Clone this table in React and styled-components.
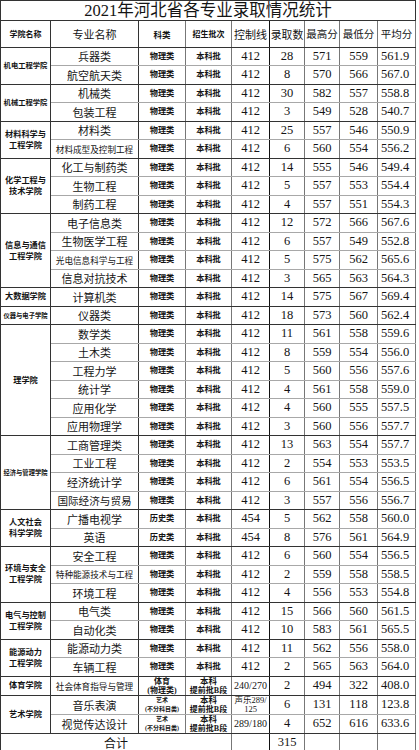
import React from "react";
import styled, { createGlobalStyle } from "styled-components";

const GlobalStyle = createGlobalStyle`
  body {
    margin: 0;
    background: #ffffff;
  }
`;

const FONT = `"Liberation Serif", "Noto Sans CJK SC", serif`;

const Sheet = styled.table`
  border-collapse: collapse;
  table-layout: fixed;
  width: 416px;
  font-family: ${FONT};
  color: #141414;
  border: 1px solid #333;
`;

const Col = styled.col`
  width: ${(p) => p.$w}px;
`;

const TitleRow = styled.tr`
  height: 20px;
`;

const TitleCell = styled.th`
  font-size: 16.5px;
  font-weight: 400;
  line-height: 18px;
  padding: 0;
  border-bottom: 1px solid #333;
  white-space: nowrap;
`;

const HeadRow = styled.tr`
  height: 26.5px;
`;

const HeadCell = styled.th`
  font-size: ${(p) => p.$size || 11}px;
  font-weight: ${(p) => (p.$bold ? 700 : 400)};
  padding: 0;
  white-space: nowrap;
  border-bottom: 1px solid #333;
  border-right: 1px solid ${(p) => p.$line || "#777"};
`;

const Row = styled.tr`
  height: ${(p) => p.$h || 18.5}px;
`;

const Cell = styled.td`
  padding: 0;
  text-align: center;
  vertical-align: middle;
  white-space: nowrap;
  overflow: hidden;
  border-bottom: 1px solid ${(p) => (p.$end ? "#333" : "#a8a8a8")};
  border-right: 1px solid #777;
`;

const SchoolCell = styled(Cell)`
  font-size: ${(p) => p.$size || 8}px;
  font-weight: 700;
  line-height: 11px;
  border-bottom: 1px solid #333;
  border-right: 1px solid #333;
`;

const MajorCell = styled(Cell)`
  font-size: ${(p) => p.$size || 11}px;
  border-right: 1px solid #333;
`;

const TagCell = styled(Cell)`
  font-size: 8.2px;
  font-weight: 700;
  line-height: 9px;
`;

const Stack = styled.span`
  display: block;
  font-size: ${(p) => p.$size || 8}px;
  line-height: ${(p) => p.$lh || 9}px;
`;

const NumCell = styled(Cell)`
  font-size: ${(p) => p.$size || 12.5}px;
  text-align: ${(p) => p.$align || "center"};
  padding-left: ${(p) => p.$pad || 0}px;
  border-right: 1px solid ${(p) => p.$line || "#777"};
`;

const TotalCell = styled(Cell)`
  font-size: 12px;
  border-bottom: none;
`;

const groups = [
  { school: ["机电工程学院"], size: 7.3, rows: [
    ["兵器类", "412", 28, 571, 559, "561.9"],
    ["航空航天类", "412", 8, 570, 566, "567.0"],
  ] },
  { school: ["机械工程学院"], size: 7.3, rows: [
    ["机械类", "412", 30, 582, 557, "558.8"],
    ["包装工程", "412", 3, 549, 528, "540.7"],
  ] },
  { school: ["材料科学与", "工程学院"], rows: [
    ["材料类", "412", 25, 557, 546, "550.9"],
    ["材料成型及控制工程", "412", 6, 560, 554, "556.2", 8.6],
  ] },
  { school: ["化学工程与", "技术学院"], rows: [
    ["化工与制药类", "412", 14, 555, 546, "549.4"],
    ["生物工程", "412", 5, 557, 553, "554.4"],
    ["制药工程", "412", 4, 557, 551, "554.3"],
  ] },
  { school: ["信息与通信", "工程学院"], rows: [
    ["电子信息类", "412", 12, 572, 566, "567.6"],
    ["生物医学工程", "412", 6, 557, 549, "552.8"],
    ["光电信息科学与工程", "412", 5, 575, 562, "565.6", 8.6],
    ["信息对抗技术", "412", 3, 565, 563, "564.3"],
  ] },
  { school: ["大数据学院"], rows: [
    ["计算机类", "412", 14, 575, 567, "569.4"],
  ] },
  { school: ["仪器与电子学院"], size: 6.3, rows: [
    ["仪器类", "412", 18, 573, 560, "562.4"],
  ] },
  { school: ["理学院"], rows: [
    ["数学类", "412", 11, 561, 558, "559.6"],
    ["土木类", "412", 8, 559, 554, "556.0"],
    ["工程力学", "412", 5, 560, 556, "557.6"],
    ["统计学", "412", 4, 561, 558, "559.0"],
    ["应用化学", "412", 4, 560, 555, "557.5"],
    ["应用物理学", "412", 3, 560, 556, "557.7"],
  ] },
  { school: ["经济与管理学院"], size: 6.3, rows: [
    ["工商管理类", "412", 13, 563, 554, "557.7"],
    ["工业工程", "412", 2, 554, 553, "553.5"],
    ["经济统计学", "412", 6, 561, 554, "556.5"],
    ["国际经济与贸易", "412", 3, 557, 556, "556.7", 10.6],
  ] },
  { school: ["人文社会", "科学学院"], subject: "历史类", rows: [
    ["广播电视学", "454", 5, 562, 558, "560.0"],
    ["英语", "454", 8, 576, 561, "564.9"],
  ] },
  { school: ["环境与安全", "工程学院"], rows: [
    ["安全工程", "412", 6, 560, 554, "556.5"],
    ["特种能源技术与工程", "412", 2, 559, 558, "558.5", 8.6],
    ["环境工程", "412", 4, 556, 553, "554.8"],
  ] },
  { school: ["电气与控制", "工程学院"], rows: [
    ["电气类", "412", 15, 566, 560, "561.5"],
    ["自动化类", "412", 10, 583, 561, "565.5"],
  ] },
  { school: ["能源动力", "工程学院"], rows: [
    ["能源动力类", "412", 11, 562, 556, "558.0"],
    ["车辆工程", "412", 2, 565, 563, "564.0"],
  ] },
];

function Subject({ lines, size }) {
  return lines.map((t) => (
    <Stack key={t} $size={size}>
      {t}
    </Stack>
  ));
}

function Batch() {
  return (
    <>
      <Stack $size={8.5}>本科</Stack>
      <Stack $size={8}>提前批B段</Stack>
    </>
  );
}

function Numbers({ line, count, max, min, avg, lineSize, end }) {
  return (
    <>
      <NumCell $end={end} $size={lineSize} $line="#111">
        {line}
      </NumCell>
      <NumCell $end={end}>{count}</NumCell>
      <NumCell $end={end}>{max}</NumCell>
      <NumCell $end={end}>{min}</NumCell>
      <NumCell $end={end} $align="left" $pad={3}>
        {avg}
      </NumCell>
    </>
  );
}

export default function App() {
  return (
    <>
      <GlobalStyle />
      <Sheet>
        <colgroup>
          {[50, 88, 47, 46, 38, 35, 35, 38, 38].map((w, i) => (
            <Col key={i} $w={w} />
          ))}
        </colgroup>
        <thead>
          <TitleRow>
            <TitleCell colSpan={9}>2021年河北省各专业录取情况统计</TitleCell>
          </TitleRow>
          <HeadRow>
            <HeadCell $size={8} $bold $line="#333">学院名称</HeadCell>
            <HeadCell $size={11} $line="#333">专业名称</HeadCell>
            <HeadCell $size={8.5} $bold>科类</HeadCell>
            <HeadCell $size={8} $bold>招生批次</HeadCell>
            <HeadCell $size={11} $line="#111">控制线</HeadCell>
            <HeadCell $size={10.8}>录取数</HeadCell>
            <HeadCell $size={10.5}>最高分</HeadCell>
            <HeadCell $size={10.5}>最低分</HeadCell>
            <HeadCell $size={10.5}>平均分</HeadCell>
          </HeadRow>
        </thead>
        <tbody>
          {groups.map((g) =>
            g.rows.map((r, i) => {
              const end = i === g.rows.length - 1;
              return (
                <Row key={r[0]}>
                  {i === 0 && (
                    <SchoolCell rowSpan={g.rows.length} $size={g.size}>
                      {g.school.map((s) => (
                        <Stack key={s} $size={g.size || 8.2} $lh={11}>
                          {s}
                        </Stack>
                      ))}
                    </SchoolCell>
                  )}
                  <MajorCell $end={end} $size={r[6]}>
                    {r[0]}
                  </MajorCell>
                  <TagCell $end={end}>{g.subject || "物理类"}</TagCell>
                  <TagCell $end={end}>本科批</TagCell>
                  <Numbers
                    end={end}
                    line={r[1]}
                    count={r[2]}
                    max={r[3]}
                    min={r[4]}
                    avg={r[5]}
                  />
                </Row>
              );
            })
          )}
          <Row>
            <SchoolCell $size={8.2}>体育学院</SchoolCell>
            <MajorCell $end $size={8.6}>社会体育指导与管理</MajorCell>
            <TagCell $end>
              <Subject lines={["体育", "(物理类)"]} size={8} />
            </TagCell>
            <TagCell $end>
              <Batch />
            </TagCell>
            <Numbers end line="240/270" lineSize={10} count={2} max={494} min={322} avg="408.0" />
          </Row>
          <Row>
            <SchoolCell rowSpan={2} $size={8.2}>艺术学院</SchoolCell>
            <MajorCell>音乐表演</MajorCell>
            <TagCell>
              <Subject lines={["艺术", "(不分科目类)"]} size={6} />
            </TagCell>
            <TagCell>
              <Batch />
            </TagCell>
            <NumCell $size={9} $line="#111">
              <Stack $size={8.5} $lh={9}>声乐289/</Stack>
              <Stack $size={8.5} $lh={9}>125</Stack>
            </NumCell>
            <NumCell>6</NumCell>
            <NumCell>131</NumCell>
            <NumCell>118</NumCell>
            <NumCell $align="left" $pad={3}>123.8</NumCell>
          </Row>
          <Row>
            <MajorCell $end>视觉传达设计</MajorCell>
            <TagCell $end>
              <Subject lines={["艺术", "(不分科目类)"]} size={6} />
            </TagCell>
            <TagCell $end>
              <Batch />
            </TagCell>
            <Numbers end line="289/180" lineSize={10} count={4} max={652} min={616} avg="633.6" />
          </Row>
          <Row $h={18}>
            <TotalCell colSpan={4}>合计</TotalCell>
            <NumCell $line="#111" />
            <NumCell>315</NumCell>
            <NumCell />
            <NumCell />
            <NumCell />
          </Row>
        </tbody>
      </Sheet>
    </>
  );
}
